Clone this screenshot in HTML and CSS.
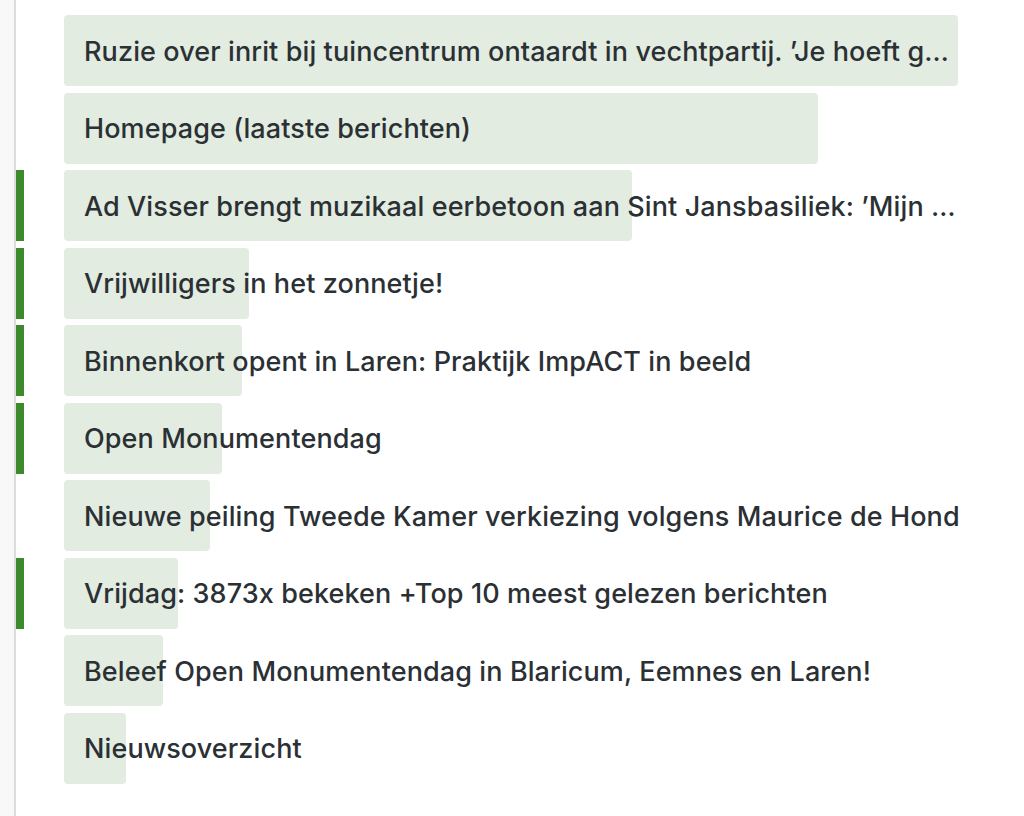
FILE: index.html
```html
<!DOCTYPE html>
<html lang="nl">
<head>
<meta charset="utf-8">
<title>Berichten</title>
<link rel="stylesheet" href="styles.css">
</head>
<body>
<div class="page">
  <aside class="side"></aside>
  <ul class="list">
    <li class="row"><span class="fill" style="width:100%"></span><span class="label">Ruzie over inrit bij tuincentrum ontaardt in vechtpartij. ’Je hoeft geen excuses te verwachten’</span></li>
    <li class="row"><span class="fill" style="width:84.3%"></span><span class="label">Homepage (laatste berichten)</span></li>
    <li class="row active"><span class="fill" style="width:63.5%"></span><span class="label">Ad Visser brengt muzikaal eerbetoon aan Sint Jansbasiliek: ’Mijn hart ligt hier’</span></li>
    <li class="row active"><span class="fill" style="width:20.7%"></span><span class="label">Vrijwilligers in het zonnetje!</span></li>
    <li class="row active"><span class="fill" style="width:19.9%"></span><span class="label">Binnenkort opent in Laren: Praktijk ImpACT in beeld</span></li>
    <li class="row active"><span class="fill" style="width:17.7%"></span><span class="label">Open Monumentendag</span></li>
    <li class="row"><span class="fill" style="width:16.3%"></span><span class="label">Nieuwe peiling Tweede Kamer verkiezing volgens Maurice de Hond</span></li>
    <li class="row active"><span class="fill" style="width:12.8%"></span><span class="label">Vrijdag: 3873x bekeken +Top 10 meest gelezen berichten</span></li>
    <li class="row"><span class="fill" style="width:11.1%"></span><span class="label">Beleef Open Monumentendag in Blaricum, Eemnes en Laren!</span></li>
    <li class="row"><span class="fill" style="width:6.9%"></span><span class="label">Nieuwsoverzicht</span></li>
  </ul>
</div>
</body>
</html>
```
FILE: styles.css
```css
* { box-sizing: border-box; }
html, body { margin: 0; padding: 0; background: #ffffff; }
body {
  font-family: Inter, "Liberation Sans", Arial, sans-serif;
  color: #2b3034;
  height: 816px;
  overflow: hidden;
}
.page {
  display: flex;
  height: 816px;
}
.side {
  width: 16px;
  flex: none;
  background: #f8f8f8;
  border-right: 2px solid #dddddd;
}
.list {
  list-style: none;
  margin: 0;
  padding: 15px 0 0 0;
  flex: 1;
  display: flex;
  flex-direction: column;
  gap: 6.5px;
}
.row {
  position: relative;
  height: 71px;
  margin-left: 48px;
  width: 894px;
  display: flex;
  align-items: center;
  padding: 0 0 0 20px;
}
.row.active::before {
  content: "";
  position: absolute;
  left: -48px;
  top: 0;
  bottom: 0;
  width: 8px;
  background: #3d8a2c;
}
.fill {
  position: absolute;
  left: 0;
  top: 0;
  bottom: 0;
  background: #e2ece0;
  border-radius: 4px;
}
.label {
  position: relative;
  top: 1px;
  flex: none;
  font-size: 27px;
  font-weight: 500;
  letter-spacing: 0.1px;
  line-height: 34px;
  white-space: nowrap;
  overflow: hidden;
  text-overflow: ellipsis;
  max-width: 880px;
}
```
